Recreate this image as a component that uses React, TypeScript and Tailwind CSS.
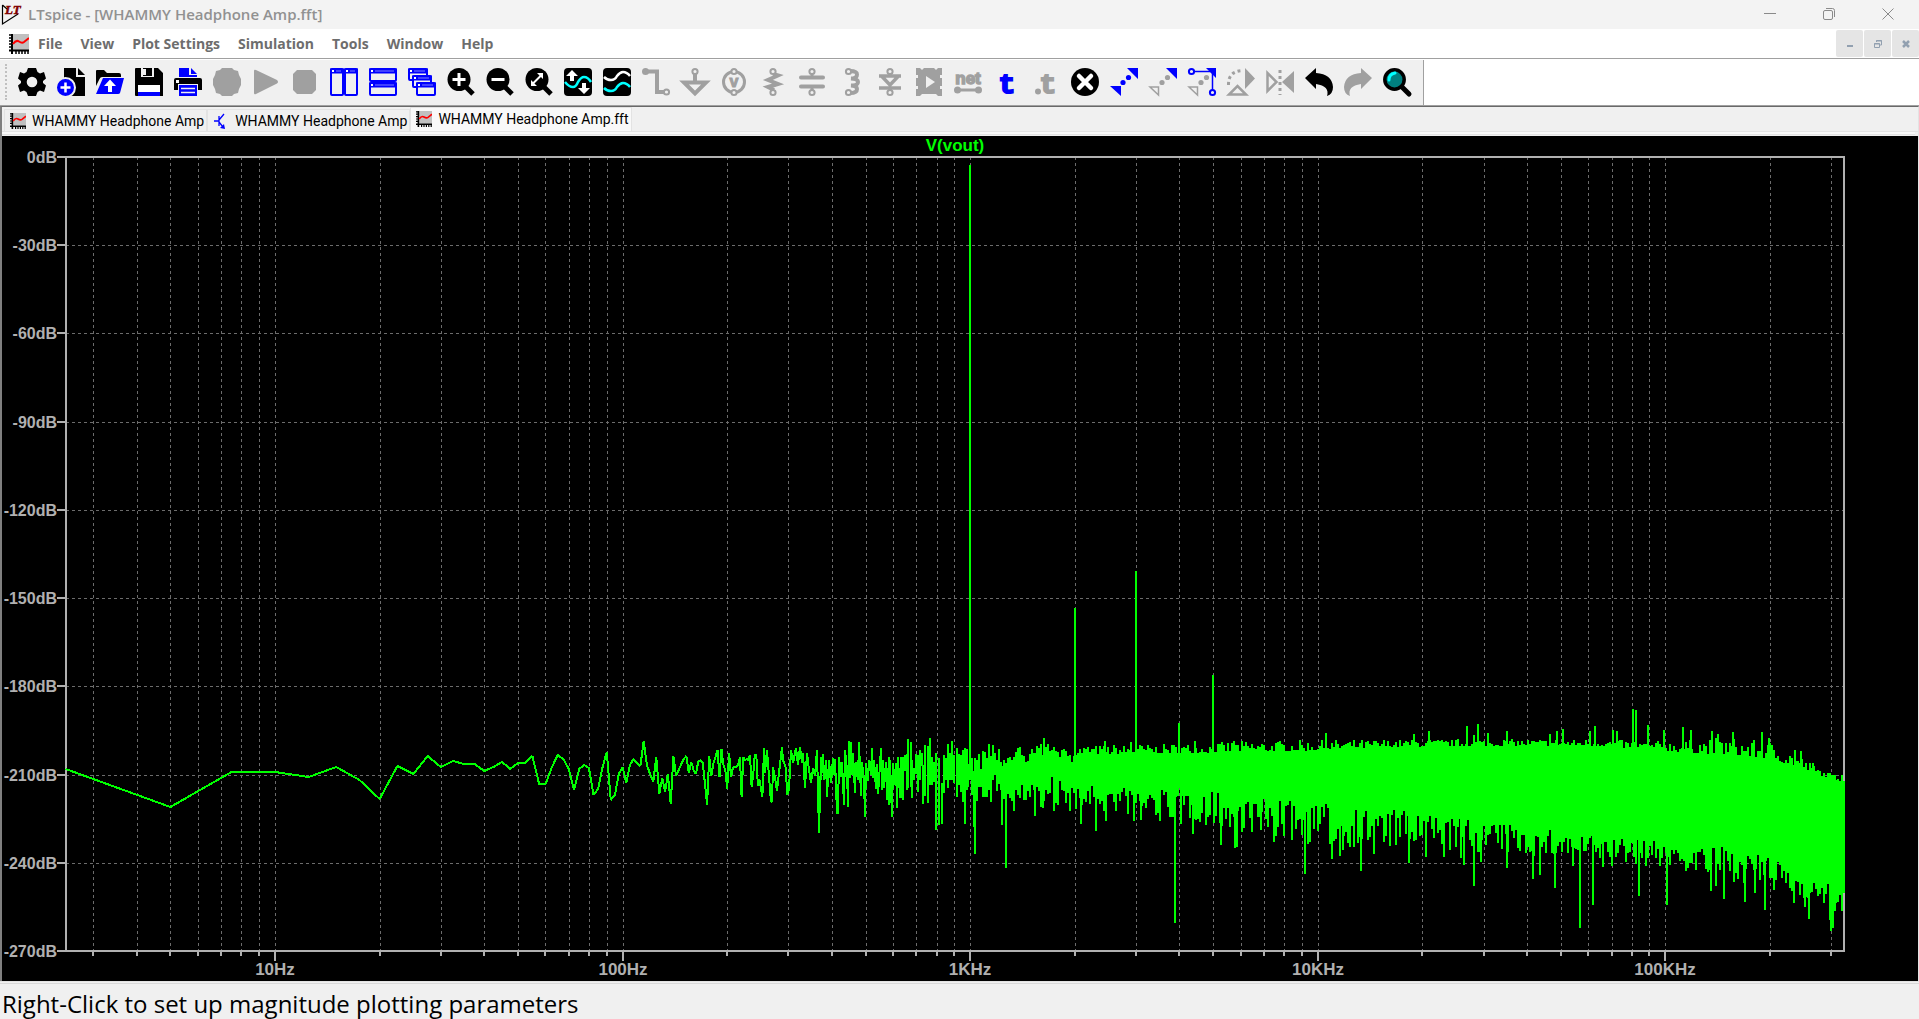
import React, { useState } from 'react';

const GRAY = '#a0a0a0';
const BLUE = '#0000ff';

/* ---------- toolbar icons, all on a 28x28 grid ---------- */

const Magnifier: React.FC<{ children?: React.ReactNode }> = ({ children }) => (
  <>
    <path d="M18 18L26 26" stroke="#000" strokeWidth="5" />
    <circle cx="12" cy="11.5" r="11.5" fill="#000" />
    {children}
  </>
);

const Ring: React.FC<{ x: number; y: number; color?: string }> = ({ x, y, color = GRAY }) => (
  <circle cx={x} cy={y} r="2.6" fill="#f0f0f0" stroke={color} strokeWidth="2" />
);

const Pane: React.FC<{ x: number; y: number; w: number; h: number }> = ({ x, y, w, h }) => (
  <>
    <rect x={x + 1} y={y + 1} width={w - 2} height={h - 2} rx="1" fill="#f0f0f0" stroke={BLUE} strokeWidth="2" />
    <path d={`M${x} ${y + 3}H${x + w}`} stroke={BLUE} strokeWidth="5" />
    <rect x={x + 2} y={y + 2} width="2" height="2" fill="#fff" />
    <path d={`M${x + 6} ${y + 3}H${x + w - 3}`} stroke="#8080ff" strokeWidth="1" />
  </>
);

const tools: { name: string; icon: React.ReactNode }[] = [
  {
    name: 'Settings',
    icon: (
      <path
        fillRule="evenodd"
        d="M10 0H18L19.5 4L22 5.5L26 4L28 10.5L25 13L25 15L28 17.5L26 24L22 22.5L19.5 24L18 28H10L8.5 24L6 22.5L2 24L0 17.5L3 15L3 13L0 10.5L2 4L6 5.5L8.5 4ZM14 8.7A5.3 5.3 0 1 0 14 19.3A5.3 5.3 0 1 0 14 8.7Z"
      />
    ),
  },
  {
    name: 'New schematic',
    icon: (
      <>
        <path d="M7 0H19V9H28V28H7Z" />
        <path d="M21 0L28 7H21Z" />
        <circle cx="8.5" cy="19.5" r="9.5" fill={BLUE} stroke="#f0f0f0" strokeWidth="2" />
        <path d="M8.500 14.500V24.500M3.500 19.500H13.500" stroke="#fff" strokeWidth="2.500" />
      </>
    ),
  },
  {
    name: 'Open',
    icon: (
      <>
        <path d="M0 18V3Q0 2 1 2H8L11 5H23Q25 5 25 7V9H6Q4 9 3 12Z" />
        <path d="M7 10H28L24 25Q23.500 26 22 26H0Z" fill={BLUE} />
        <path d="M14 11.500L20 18H16V24H12V18H8Z" fill="#fff" />
      </>
    ),
  },
  {
    name: 'Save',
    icon: (
      <>
        <path d="M1 0H6V9H19V0H23L28 5V28H1Q0 28 0 27V1Q0 0 1 0Z" />
        <rect x="8" y="0" width="9" height="8" />
        <rect x="8" y="1" width="3" height="6" fill="#f0f0f0" />
        <rect x="3" y="17" width="22" height="11" fill="#fff" />
        <rect x="3" y="24" width="22" height="4" fill={BLUE} />
      </>
    ),
  },
  {
    name: 'Print',
    icon: (
      <>
        <path d="M5 9V0H15V7H23V9Z" fill={BLUE} />
        <path d="M17 0L23 6H17Z" fill={BLUE} />
        <path d="M2 10H26Q28 10 28 12V22H0V12Q0 10 2 10Z" />
        <rect x="2" y="12" width="3" height="3" fill="#fff" />
        <rect x="4" y="16" width="20" height="12" fill="#f0f0f0" />
        <path d="M5 17H23V28H5Z" fill={BLUE} />
        <path d="M7 20.500H21M7 24.500H21" stroke="#f0f0f0" strokeWidth="1.500" />
      </>
    ),
  },
  {
    name: 'Configure analysis',
    icon: <path fill={GRAY} d="M9 0H19L21 2L25 3L26 7L28 11V17L26 21L25 25L21 26L19 28H9L7 26L3 25L2 21L0 17V11L2 7L3 3L7 2Z" />,
  },
  { name: 'Run', icon: <path fill={GRAY} d="M2 3Q2 1 4 2L25 12Q27 14 25 15.500L4 26Q2 27 2 25Z" /> },
  { name: 'Stop', icon: <path fill={GRAY} d="M6 2H21L25 6V22L21 26H6L2 22V6Z" /> },
  {
    name: 'Tile vertically',
    icon: (
      <>
        <Pane x={0} y={0} w={14} h={28} />
        <Pane x={14} y={0} w={14} h={28} />
      </>
    ),
  },
  {
    name: 'Tile horizontally',
    icon: (
      <>
        <Pane x={0} y={0} w={28} h={14} />
        <Pane x={0} y={14} w={28} h={14} />
      </>
    ),
  },
  {
    name: 'Cascade',
    icon: (
      <>
        <Pane x={0} y={0} w={20} h={13} />
        <Pane x={4} y={7} w={20} h={13} />
        <Pane x={8} y={14} w={20} h={14} />
      </>
    ),
  },
  {
    name: 'Zoom in',
    icon: (
      <Magnifier>
        <path d="M12 5V18M5.500 11.500H18.500" stroke="#fff" strokeWidth="3" />
      </Magnifier>
    ),
  },
  {
    name: 'Zoom out',
    icon: (
      <Magnifier>
        <path d="M5.500 11.500H18.500" stroke="#fff" strokeWidth="3" />
      </Magnifier>
    ),
  },
  {
    name: 'Zoom to fit',
    icon: (
      <Magnifier>
        <path d="M8 15.500L16 7.500" stroke="#fff" strokeWidth="2" />
        <path d="M12 5H18V11ZM6 12V18H12Z" fill="#fff" />
      </Magnifier>
    ),
  },
  {
    name: 'Autorange',
    icon: (
      <>
        <rect width="28" height="28" rx="4" />
        <path d="M1 14Q5 19 9 19Q12 19 14 14Q17 9 20 9Q24 9 27 14" stroke="#00ffff" strokeWidth="2.500" fill="none" />
        <path d="M8 2L14 8H10V13H6V8H2ZM20 26L14 20H18V15H22V20H26Z" fill="#fff" />
      </>
    ),
  },
  {
    name: 'Pick visible traces',
    icon: (
      <>
        <rect width="28" height="28" rx="4" />
        <path d="M1 9Q4 12 8 12Q12 12 14 8Q17 4 20 4Q24 4 27 8" stroke="#fff" strokeWidth="2.500" fill="none" />
        <path d="M1 20Q4 23 8 23Q12 23 14 19Q17 15 20 15Q24 15 27 19" stroke="#00ffff" strokeWidth="2.500" fill="none" />
      </>
    ),
  },
  {
    name: 'Wire',
    icon: (
      <>
        <path d="M4 3.500H15V24H24" stroke={GRAY} strokeWidth="4" fill="none" />
        <circle cx="3.500" cy="3.500" r="3.500" fill={GRAY} />
        <Ring x={24.5} y={24} />
      </>
    ),
  },
  {
    name: 'Ground',
    icon: (
      <>
        <path d="M14 6V14M3 14.500H25L14 25.500Z" stroke={GRAY} strokeWidth="4" fill="none" />
        <Ring x={14} y={3.5} />
      </>
    ),
  },
  {
    name: 'Voltage source',
    icon: (
      <>
        <circle cx="14" cy="14" r="10.500" fill="none" stroke={GRAY} strokeWidth="3" />
        <text x="14" y="19" textAnchor="middle" className="text-[16px] font-bold" fill={GRAY} stroke={GRAY}>
          v
        </text>
        <Ring x={14} y={3.5} />
        <Ring x={14} y={24.5} />
      </>
    ),
  },
  {
    name: 'Resistor',
    icon: (
      <>
        <path d="M14 6L19 7.500L9 12L19 16L9 19L15 22" stroke={GRAY} strokeWidth="4" fill="none" />
        <Ring x={14} y={3.5} />
        <Ring x={14} y={24.5} />
      </>
    ),
  },
  {
    name: 'Capacitor',
    icon: (
      <>
        <path d="M14 5V9M14 19V23" stroke={GRAY} strokeWidth="3" />
        <path d="M3 9.500H25M3 18.500H25" stroke={GRAY} strokeWidth="4" strokeLinecap="round" />
        <Ring x={14} y={3.5} />
        <Ring x={14} y={24.5} />
      </>
    ),
  },
  {
    name: 'Inductor',
    icon: (
      <>
        <path d="M13 3Q20 3 20 6.500Q20 10.500 14 10.500Q21 11 21 14Q21 17.500 14 17.500Q20 18 20 21Q20 25 13 25" stroke={GRAY} strokeWidth="4" fill="none" />
        <Ring x={11.5} y={3.5} />
        <Ring x={11.5} y={24.5} />
      </>
    ),
  },
  {
    name: 'Diode',
    icon: (
      <>
        <path d="M14 5V8M3 8H25M14 19V23M3 20H25M6 8.500L14 17L22 8.500" stroke={GRAY} strokeWidth="3.500" fill="none" />
        <Ring x={14} y={3.5} />
        <Ring x={14} y={24.5} />
      </>
    ),
  },
  {
    name: 'Component',
    icon: (
      <>
        <path d="M1 0H5L7 2L9 0H19L21 2L23 0H27V7H25V10H27V18H25V21H27V28H23L21 26H7L5 28H1V21H3V18H1V10H3V7H1Z" fill={GRAY} />
        <path d="M11 8L20 14L11 20Z" fill="#f0f0f0" />
      </>
    ),
  },
  {
    name: 'Label net',
    icon: (
      <>
        <text x="14" y="16" textAnchor="middle" className="text-[17px] font-bold" fill={GRAY} stroke={GRAY} strokeWidth="1.5">
          net
        </text>
        <path d="M3 22H25" stroke={GRAY} strokeWidth="3" />
        <circle cx="3.500" cy="22" r="3.500" fill={GRAY} />
        <circle cx="24.500" cy="22" r="3.500" fill={GRAY} />
      </>
    ),
  },
  {
    name: 'Text',
    icon: (
      <text x="14" y="25" textAnchor="middle" className="font-mono text-[28px] font-bold" fill={BLUE} stroke={BLUE} strokeWidth="2">
        t
      </text>
    ),
  },
  {
    name: 'SPICE directive',
    icon: (
      <>
        <text x="16" y="25" textAnchor="middle" className="font-mono text-[28px] font-bold" fill={GRAY} stroke={GRAY} strokeWidth="2">
          t
        </text>
        <circle cx="6" cy="23.500" r="3" fill={GRAY} />
      </>
    ),
  },
  {
    name: 'Delete',
    icon: (
      <>
        <circle cx="14" cy="14" r="14" />
        <path d="M8 8L20 20M20 8L8 20" stroke="#fff" strokeWidth="4.500" strokeLinecap="round" />
      </>
    ),
  },
  {
    name: 'Move',
    icon: (
      <>
        <path d="M17 0H28V11ZM0 18H11V28Z" fill={BLUE} />
        <circle cx="18.500" cy="9.500" r="2.600" fill={BLUE} />
        <circle cx="13" cy="14.500" r="2.600" fill={BLUE} />
      </>
    ),
  },
  {
    name: 'Copy',
    icon: (
      <>
        <path d="M17 0H28V11Z" fill={BLUE} />
        <path d="M1 19H9.500V27Z" fill="none" stroke={GRAY} strokeWidth="1.500" />
        <circle cx="18.500" cy="9.500" r="2.600" fill={GRAY} />
        <circle cx="13" cy="14.500" r="2.600" fill={GRAY} />
      </>
    ),
  },
  {
    name: 'Drag',
    icon: (
      <>
        <path d="M18 0H28V10Z" fill={BLUE} />
        <path d="M1 19H9.500V27Z" fill="none" stroke={GRAY} strokeWidth="1.500" />
        <circle cx="18.500" cy="9.500" r="2.600" fill={GRAY} />
        <circle cx="13" cy="14.500" r="2.600" fill={GRAY} />
        <path d="M6 3.500H24.500V22" stroke={BLUE} strokeWidth="1.500" fill="none" />
        <Ring x={3.5} y={3.5} color={BLUE} />
        <Ring x={24.5} y={24.5} color={BLUE} />
      </>
    ),
  },
  {
    name: 'Rotate',
    icon: (
      <>
        <path d="M18 0L28 10.500L18 21Z" fill={GRAY} />
        <path d="M1.500 17Q1 3 16 2.500" stroke={GRAY} strokeWidth="3" strokeDasharray="3 3" fill="none" />
        <path d="M2 26.500H19L10.500 18Z" fill="none" stroke={GRAY} strokeWidth="2.500" />
      </>
    ),
  },
  {
    name: 'Mirror',
    icon: (
      <>
        <path d="M1.500 5V23L10.500 14Z" fill="none" stroke={GRAY} strokeWidth="2.500" />
        <path d="M28 3V25L16 14Z" fill={GRAY} />
        <path d="M14 2V27" stroke={GRAY} strokeWidth="3" strokeDasharray="3 3" />
      </>
    ),
  },
  { name: 'Undo', icon: <path d="M0 10L11 0V5Q27 6 28 19Q28 26 22 28Q25 18 11 16V21Z" /> },
  { name: 'Redo', icon: <path fill={GRAY} d="M28 10L17 0V5Q1 6 0 19Q0 26 6 28Q3 18 17 16V21Z" /> },
  {
    name: 'Find',
    icon: (
      <>
        <path d="M18 18L26 26" stroke="#000" strokeWidth="5" strokeLinecap="round" />
        <circle cx="11.500" cy="11.500" r="9.700" fill="#008080" stroke="#000" strokeWidth="3.500" />
        <path d="M6 12Q6 6 12 5" stroke="#00ffff" strokeWidth="3" fill="none" strokeLinecap="round" />
      </>
    ),
  },
];

const PlotIcon: React.FC = () => (
  <svg viewBox="0 0 20 20" className="size-full" aria-hidden="true">
    <rect x="4" width="16" height="16" fill="#c0c0c0" />
    <path d="M3 0V20M0 16.500H20" stroke="#000" strokeWidth="2" />
    <path d="M0 1H3M0 4H3M0 7H3M0 10H3M0 13H3M7 17V20M10 17V20M13 17V20M16 17V20M19 17V20" stroke="#000" strokeWidth="1.5" />
    <path d="M4 10Q7 5.500 10 7.500T15 8L20 4" fill="none" stroke="#f00" strokeWidth="2" />
  </svg>
);

const TransistorIcon: React.FC = () => (
  <svg viewBox="0 0 16 16" className="size-full" aria-hidden="true">
    <path d="M1 8H6M6 3V13M6 7L11 1M6 9L10 14" stroke={BLUE} strokeWidth="1.3" fill="none" />
    <path d="M12 16L7 15L11 11Z" fill={BLUE} />
  </svg>
);

/* ---------- FFT plot ---------- */

const PLOT = { left: 66, right: 1844, top: 157, bottom: 951 };
const DECADE = 347.6;

const freqX = (hz: number) => 275.5 + DECADE * Math.log10(hz / 10);
const dbY = (db: number) => PLOT.top + ((PLOT.bottom - PLOT.top) * -db) / 270;

// low end of the spectrum, one level per 2.5 Hz bin
const BINS = [
  769, 807, 772, 772, 777, 767, 780, 799, 766, 774, 756, 767, 761, 764, 764, 771, 767, 762, 769, 763, 763, 756, 784, 784,
  768, 755, 759, 769, 790, 769, 765, 768, 795, 789, 768, 752, 800, 795, 774, 767, 783, 765, 759, 763, 766, 741, 765, 774,
  782, 757, 794, 778, 792, 774, 804, 756, 776, 770, 764, 759, 756, 773, 762, 770, 774, 762, 760, 763, 783, 805, 756, 776,
  763, 757, 750, 777, 749, 765, 770, 789, 753, 777, 768, 767, 767, 765, 757, 797, 757, 760, 759, 760, 755, 787, 775, 755,
  755, 786, 779, 788, 797,
];

const MID: [number, number][] = [
  [764, 748], [765, 773], [767, 750], [769, 777], [771, 802], [772, 801], [773, 767], [775, 777], [777, 791], [779, 773],
  [782, 747], [783, 760], [786, 768], [787, 795], [789, 789], [791, 750], [793, 763], [796, 748], [798, 765], [800, 747],
  [802, 763], [803, 753], [805, 788], [807, 753], [809, 770], [811, 783], [813, 768], [815, 776], [817, 750], [819, 833],
  [821, 757], [821, 780], [823, 754], [824, 780], [826, 760], [827, 797], [829, 760], [831, 783], [833, 758], [834, 775],
  [835, 759], [837, 813], [838, 813], [839, 757], [841, 777], [842, 762], [844, 805], [845, 750], [847, 770], [848, 807],
  [849, 741], [850, 778], [851, 742], [852, 775], [853, 753], [855, 793], [856, 762], [858, 780], [859, 742], [861, 796],
  [862, 762], [864, 780], [865, 817], [866, 763], [868, 781], [869, 760], [871, 775], [872, 748], [873, 778], [874, 760],
  [876, 789], [877, 764], [878, 794], [880, 765], [881, 748], [882, 790], [883, 760], [884, 788], [886, 762], [887, 800],
  [889, 757], [889, 805], [890, 760], [892, 817], [893, 763], [895, 785], [896, 763], [897, 808], [898, 757], [900, 798],
];

// x, top, bottom of each two pixel wide column
const COLUMNS: [number, number, number][] = [
  [901, 757, 798], [903, 757, 800], [905, 755, 771], [907, 754, 790], [908, 739, 788], [911, 742, 787], [912, 760, 798],
  [914, 768, 780], [916, 754, 774], [918, 755, 792], [920, 750, 780], [922, 753, 766], [923, 765, 804], [925, 745, 796],
  [928, 746, 803], [930, 738, 785], [932, 757, 785], [934, 762, 782], [936, 753, 830], [939, 758, 825], [942, 783, 824],
  [944, 755, 793], [946, 758, 780], [948, 744, 788], [950, 753, 780], [952, 741, 780], [954, 755, 783], [957, 748, 797],
  [959, 754, 785], [961, 755, 792], [963, 750, 802], [965, 748, 824], [967, 749, 790], [968, 764, 787], [970, 758, 780],
  [972, 758, 795], [974, 771, 827], [975, 758, 854], [977, 760, 801], [979, 754, 787], [981, 769, 787], [983, 751, 797],
  [985, 752, 797], [987, 758, 797], [989, 744, 790], [991, 756, 802], [993, 745, 780], [995, 753, 775], [997, 760, 791],
  [999, 749, 784], [1001, 762, 790], [1002, 766, 825], [1004, 760, 799], [1006, 763, 868], [1008, 758, 794],
  [1010, 757, 798], [1012, 760, 801], [1014, 757, 811], [1016, 752, 790], [1018, 748, 795], [1020, 747, 798],
  [1022, 755, 785], [1024, 756, 800], [1026, 762, 800], [1028, 761, 791], [1030, 754, 797], [1032, 749, 785],
  [1034, 753, 790], [1035, 753, 816], [1037, 746, 787], [1039, 748, 791], [1041, 744, 807], [1043, 755, 808],
  [1044, 738, 801], [1046, 747, 790], [1048, 744, 794], [1050, 751, 793], [1052, 750, 777], [1054, 747, 811],
  [1056, 751, 803], [1058, 752, 805], [1060, 757, 781], [1062, 750, 790], [1064, 749, 791], [1066, 751, 803],
  [1068, 756, 793], [1070, 755, 811], [1072, 762, 788], [1074, 756, 793],
];

// x, typical top, highest top, typical bottom, lowest bottom
const ENVELOPE = [
  [1076, 755, 745, 783, 811],
  [1140, 754, 744, 787, 817],
  [1200, 753, 743, 789, 823],
  [1240, 752, 741, 796, 832],
  [1317, 751, 740, 803, 847],
  [1400, 747, 739, 810, 849],
  [1500, 746, 739, 823, 854],
  [1600, 746, 739, 836, 862],
  [1665, 751, 741, 841, 868],
  [1730, 755, 737, 848, 882],
  [1770, 759, 741, 858, 886],
  [1800, 768, 755, 873, 898],
  [1825, 777, 772, 884, 902],
  [1844, 782, 776, 884, 914],
];

const PEAKS: [number, number][] = [
  [970, 165], [1075, 608], [1105, 741], [1131, 742], [1136, 571], [1179, 723], [1195, 741], [1213, 675], [1234, 741],
  [1326, 733], [1414, 734], [1429, 731], [1467, 726], [1474, 735], [1478, 724], [1488, 733], [1507, 731], [1550, 734],
  [1557, 731], [1563, 729], [1590, 731], [1595, 726], [1613, 730], [1617, 731], [1633, 709], [1636, 710], [1648, 725],
  [1664, 730], [1683, 727], [1691, 730], [1712, 731], [1718, 734], [1733, 732], [1762, 732], [1769, 738], [1795, 750],
  [1801, 751], [1813, 763],
];

const NOTCHES: [number, number][] = [
  [1081, 824], [1096, 831], [1106, 821], [1134, 821], [1141, 820], [1160, 821], [1175, 923], [1181, 824], [1193, 834],
  [1206, 825], [1221, 845], [1230, 827], [1235, 848], [1237, 847], [1261, 830], [1274, 842], [1305, 874], [1332, 859],
  [1340, 856], [1343, 850], [1361, 871], [1374, 854], [1409, 863], [1426, 857], [1444, 857], [1461, 858], [1464, 865],
  [1474, 886], [1481, 862], [1507, 868], [1533, 879], [1540, 875], [1555, 888], [1573, 866], [1580, 928], [1593, 905],
  [1603, 867], [1612, 866], [1639, 896], [1667, 905], [1687, 867], [1711, 891], [1716, 886], [1724, 899], [1745, 902],
  [1755, 893], [1765, 910], [1774, 890], [1794, 903], [1805, 907], [1809, 919], [1824, 903], [1830, 920], [1831, 931],
  [1833, 928], [1835, 911], [1842, 911],
];

const buildTrace = () => {
  let d = BINS.map((y, i) => `${i ? 'L' : 'M'}${(freqX(2.5 * (i + 1)) - 0.5).toFixed(1)} ${y}`).join('');
  d += MID.map(([x, y]) => `L${x} ${y}`).join('');
  return d;
};

const buildNoise = () => {
  let seed = 7;
  const rand = () => {
    seed = (seed * 16807) % 2147483647;
    return seed / 2147483647;
  };
  let d = COLUMNS.map(([x, top, bottom]) => `M${x} ${top}V${bottom}`).join('');
  let k = 0;
  for (let x = 1076; x <= PLOT.right; x += 2) {
    while (k < ENVELOPE.length - 2 && x > ENVELOPE[k + 1][0]) k++;
    const a = ENVELOPE[k];
    const b = ENVELOPE[k + 1];
    const t = (x - a[0]) / (b[0] - a[0]);
    const mix = (i: number) => a[i] + (b[i] - a[i]) * t;
    const top = mix(1) + (mix(2) - mix(1)) * rand() ** 1.5;
    const bottom = mix(3) + (mix(4) - mix(3)) * rand();
    d += `M${x} ${Math.round(top)}V${Math.round(bottom)}`;
  }
  PEAKS.forEach(([x, y]) => (d += `M${x} ${y}V775`));
  NOTCHES.forEach(([x, y]) => (d += `M${x} 775V${y}`));
  return d;
};

const TRACE = buildTrace();
const NOISE = buildNoise();

const FREQS: number[] = [];
for (let dec = 1; dec <= 100000; dec *= 10) {
  for (let m = 1; m < 10; m++) {
    const hz = dec * m;
    if (hz >= 3 && hz < 327680) FREQS.push(hz);
  }
}
const LEVELS = [0, -30, -60, -90, -120, -150, -180, -210, -240, -270];
const FREQ_LABELS: [number, string][] = [
  [10, '10Hz'],
  [100, '100Hz'],
  [1000, '1KHz'],
  [10000, '10KHz'],
  [100000, '100KHz'],
];

const FftPlot: React.FC = () => (
  <svg viewBox="2 136 1916 845" className="block h-auto w-full bg-black font-bold" role="img" aria-label="FFT of V(vout)">
    <g stroke="#6c6c6c" strokeDasharray="3 3" shapeRendering="crispEdges">
      {FREQS.map((hz) => {
        const x = Math.floor(freqX(hz)) + 0.5;
        return <path key={hz} d={`M${x} ${PLOT.top}V${PLOT.bottom}`} />;
      })}
      {LEVELS.slice(1, -1).map((db) => {
        const y = Math.round(dbY(db)) + 0.5;
        return <path key={db} d={`M${PLOT.left} ${y}H${PLOT.right}`} />;
      })}
    </g>
    <g stroke="#b0b0b0" strokeWidth="2" fill="none" shapeRendering="crispEdges">
      <rect x={PLOT.left} y={PLOT.top} width={PLOT.right - PLOT.left} height={PLOT.bottom - PLOT.top} />
      {LEVELS.map((db) => (
        <path key={db} d={`M57 ${Math.round(dbY(db))}H66`} />
      ))}
      {FREQS.map((hz) => (
        <path key={hz} d={`M${Math.floor(freqX(hz))} ${PLOT.bottom}v${FREQ_LABELS.some(([f]) => f === hz) ? 10 : 5}`} />
      ))}
    </g>
    <g stroke="#00ff00" strokeWidth="2" fill="none" shapeRendering="crispEdges">
      <path d={TRACE} strokeLinejoin="bevel" />
      <path d={NOISE} />
    </g>
    <g fill="#b0b0b0" className="text-[16px]">
      {LEVELS.map((db) => (
        <text key={db} x="57" y={Math.round(dbY(db)) + 6} textAnchor="end">
          {db}dB
        </text>
      ))}
    </g>
    <g fill="#b0b0b0" className="text-[17px]">
      {FREQ_LABELS.map(([hz, label]) => (
        <text key={hz} x={Math.floor(freqX(hz))} y="975" textAnchor="middle">
          {label}
        </text>
      ))}
    </g>
    <text x="955" y="151" textAnchor="middle" fill="#00ff00" className="text-[17px]">
      V(vout)
    </text>
  </svg>
);

/* ---------- window ---------- */

const menus = ['File', 'View', 'Plot Settings', 'Simulation', 'Tools', 'Window', 'Help'];

const tabs = [
  { label: 'WHAMMY Headphone Amp', icon: <PlotIcon /> },
  { label: 'WHAMMY Headphone Amp', icon: <TransistorIcon /> },
  { label: 'WHAMMY Headphone Amp.fft', icon: <PlotIcon /> },
];

const App: React.FC = () => {
  const [active, setActive] = useState(2);

  return (
    <div className="flex min-h-screen flex-col bg-[#f0f0f0] font-['Liberation_Sans',Arial,sans-serif] text-black">
      <header className="flex h-[29px] items-center bg-[#f3f3f3] pr-0.5 pl-0.5">
        <svg viewBox="0 0 22 22" className="size-[22px] overflow-visible" aria-hidden="true">
          <path d="M0.500 1V20L16 10M0.500 1L5 5" fill="none" stroke="#000" strokeWidth="1.200" />
          <text x="3" y="10" className="font-['Liberation_Serif',serif] text-[13px] font-bold italic" fill="#800000" stroke="#800000" strokeWidth="0.500">
            LT
          </text>
        </svg>
        <h1 className="ml-1 flex-1 pb-px font-['Open_Sans','Segoe_UI',sans-serif] text-[15px] leading-5 font-semibold text-[#919191]">
          LTspice - [WHAMMY Headphone Amp.fft]
        </h1>
        <div className="flex h-full pb-px text-[#8a8a8a]">
          <button aria-label="Minimize" className="grid w-[59px] place-items-center">
            <svg viewBox="0 0 12 12" className="size-3" stroke="currentColor"><path d="M0 5.500H12" /></svg>
          </button>
          <button aria-label="Restore" className="grid w-[59px] place-items-center">
            <svg viewBox="0 0 12 12" className="size-3" fill="none" stroke="currentColor">
              <rect x="0.500" y="2.500" width="9" height="9" rx="1.500" />
              <path d="M3 0.500H9.500Q11.500 0.500 11.500 2.500V9" />
            </svg>
          </button>
          <button aria-label="Close" className="grid w-[59px] place-items-center">
            <svg viewBox="0 0 12 12" className="size-3" stroke="currentColor"><path d="M0.500 0.500L11.500 11.500M11.500 0.500L0.500 11.500" /></svg>
          </button>
        </div>
      </header>

      <nav className="flex h-[30px] items-center border-b border-[#a0a0a0] bg-white pl-[9px]">
        <span className="size-5"><PlotIcon /></span>
        {menus.map((m) => (
          <button key={m} className="px-[9px] font-['Open_Sans','Segoe_UI',sans-serif] text-[14px] leading-5 font-bold text-[#6d6d6d]">
            {m}
          </button>
        ))}
        <div className="ml-auto flex h-[27px] gap-px text-[#92a0b0]">
          <button aria-label="Minimize document" className="grid w-[27px] place-items-center rounded-xs bg-[#e5e5e5]">
            <svg viewBox="0 0 8 8" className="size-2"><path d="M1 6H7" stroke="currentColor" strokeWidth="2" /></svg>
          </button>
          <button aria-label="Restore document" className="grid w-[27px] place-items-center rounded-xs bg-[#e5e5e5]">
            <svg viewBox="0 0 8 8" className="size-2" fill="none" stroke="currentColor"><path d="M2.500 2V0.500H7.500V5H6M0.500 3.500H5.500V7.500H0.500ZM0 4H6M2 1H8" /></svg>
          </button>
          <button aria-label="Close document" className="grid w-[27px] place-items-center rounded-xs bg-[#e5e5e5]">
            <svg viewBox="0 0 8 8" className="size-2"><path d="M1 1L7 7M7 1L1 7" stroke="currentColor" strokeWidth="2.500" /></svg>
          </button>
        </div>
      </nav>

      <div className="flex h-[47px] border-t border-b border-t-white border-b-[#a0a0a0] bg-white">
        <div role="toolbar" aria-label="Main" className="flex items-center border-r border-[#a0a0a0] bg-[#f0f0f0] pr-3 pb-px pl-[5px]">
          <div className="mr-[11px] h-9 border-l-2 border-dotted border-[#c0c0c0]"></div>
          <div className="flex gap-[11px]">
            {tools.map((t) => (
              <button key={t.name} aria-label={t.name} className="size-7">
                <svg viewBox="0 0 28 28" className="size-7 overflow-visible">{t.icon}</svg>
              </button>
            ))}
          </div>
        </div>
      </div>

      <div className="border-t border-r border-l-2 border-t-[#696969] border-r-[#e3e3e3] border-l-[#808080]">
        <div role="tablist" className="flex h-6 items-end pl-0.5 font-['Roboto',Arial,sans-serif]">
          {tabs.map((t, i) => (
            <button
              key={i}
              role="tab"
              aria-selected={active === i}
              onClick={() => setActive(i)}
              className={`flex items-center gap-1.5 border border-b-0 border-[#e3e3e3] pr-0.5 pl-[5px] text-[14px] leading-4 ${
                active === i ? 'h-6 bg-[#f9f9f9] pb-0.5' : 'h-[22px] bg-[#f0f0f0]'
              }`}
            >
              <span className="size-4">{t.icon}</span>
              {t.label}
            </button>
          ))}
        </div>
        <div className="h-[5px] border-t border-[#e3e3e3]">
          <div className="mr-[3px] h-[3px] border-b border-[#e3e3e3] bg-[#f9f9f9]"></div>
        </div>
        <FftPlot />
      </div>

      <footer className="flex-1 border-t border-[#e3e3e3]">
        <div className="border-b border-[#d9d9d9] pt-px"></div>
        <p className="pt-1 pl-0.5 font-['Open_Sans','Segoe_UI',sans-serif] text-[24px] leading-8">Right-Click to set up magnitude plotting parameters</p>
      </footer>
    </div>
  );
};

export default App;
